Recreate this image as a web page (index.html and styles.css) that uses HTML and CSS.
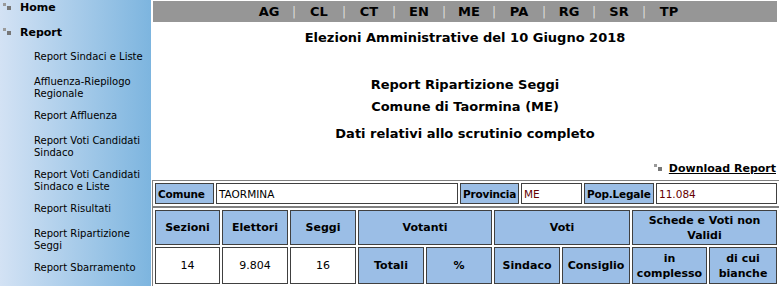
FILE: index.html
```html
<!DOCTYPE html>
<html lang="it">
<head>
  <meta charset="UTF-8" />
  <title>Report Ripartizione Seggi</title>
  <link rel="stylesheet" href="styles.css">
</head>
<body>
  <div class="page">
    <div class="sidebar">
      <a class="menu-main" href="#"><span class="bullet"></span>Home</a>
      <a class="menu-main" href="#"><span class="bullet"></span>Report</a>
      <ul class="submenu">
        <li><a href="#">Report Sindaci e Liste</a></li>
        <li class="two"><a href="#">Affluenza-Riepilogo Regionale</a></li>
        <li><a href="#">Report Affluenza</a></li>
        <li class="two"><a href="#">Report Voti Candidati Sindaco</a></li>
        <li class="two"><a href="#">Report Voti Candidati Sindaco e Liste</a></li>
        <li><a href="#">Report Risultati</a></li>
        <li class="two"><a href="#">Report Ripartizione Seggi</a></li>
        <li><a href="#">Report Sbarramento</a></li>
      </ul>
    </div>

    <div class="content">
      <div class="provbar">
        <a href="#">AG</a><span class="sep">|</span>
        <a href="#">CL</a><span class="sep">|</span>
        <a href="#">CT</a><span class="sep">|</span>
        <a href="#">EN</a><span class="sep">|</span>
        <a href="#">ME</a><span class="sep">|</span>
        <a href="#">PA</a><span class="sep">|</span>
        <a href="#">RG</a><span class="sep">|</span>
        <a href="#">SR</a><span class="sep">|</span>
        <a href="#">TP</a>
      </div>

      <h1 class="election">Elezioni Amministrative del 10 Giugno 2018</h1>

      <div class="report-title">
        <h2>Report Ripartizione Seggi</h2>
        <h2>Comune di Taormina (ME)</h2>
        <h2>Dati relativi allo scrutinio completo</h2>
      </div>

      <div class="download">
        <span class="bullet"></span><a href="#">Download Report</a>
      </div>

      <div class="frame">
        <table class="info">
          <colgroup>
            <col class="w-lbl1">
            <col>
            <col class="w-lbl2">
            <col class="w-prov">
            <col class="w-lbl3">
            <col class="w-pop">
          </colgroup>
          <tr>
            <td class="lbl">Comune</td>
            <td class="val">TAORMINA</td>
            <td class="lbl">Provincia</td>
            <td class="val val-red">ME</td>
            <td class="lbl">Pop.Legale</td>
            <td class="val val-red">11.084</td>
          </tr>
        </table>
        <table class="data">
          <colgroup>
            <col class="w65">
            <col class="w66">
            <col class="w66">
            <col class="w66">
            <col class="w66">
            <col class="w66">
            <col class="w68">
            <col class="w75">
            <col>
          </colgroup>
          <tr class="r1">
            <th>Sezioni</th>
            <th>Elettori</th>
            <th>Seggi</th>
            <th colspan="2">Votanti</th>
            <th colspan="2">Voti</th>
            <th colspan="2">Schede e Voti non Validi</th>
          </tr>
          <tr class="r2">
            <td>14</td>
            <td>9.804</td>
            <td>16</td>
            <th>Totali</th>
            <th>%</th>
            <th>Sindaco</th>
            <th>Consiglio</th>
            <th>in complesso</th>
            <th>di cui bianche</th>
          </tr>
          <tr class="r3">
            <td>&nbsp;</td>
            <td>&nbsp;</td>
            <td>&nbsp;</td>
            <td>&nbsp;</td>
            <td>&nbsp;</td>
            <td>&nbsp;</td>
            <td>&nbsp;</td>
            <td>&nbsp;</td>
            <td>&nbsp;</td>
          </tr>
        </table>
      </div>
    </div>
  </div>
</body>
</html>
```

FILE: styles.css
```css
html, body {
  margin: 0;
  padding: 0;
  height: 100%;
  overflow: hidden;
}

body {
  font-family: "DejaVu Sans", Verdana, sans-serif;
  color: #000;
  background: #fff;
}

a {
  color: #000;
  text-decoration: none;
}

.page {
  display: flex;
  height: 100%;
}

/* left menu */
.sidebar {
  width: 151px;
  flex: none;
  background: linear-gradient(to right, #d3e2f4, #7db5df);
  padding-top: 1px;
}

.bullet {
  display: inline-block;
  width: 9px;
  height: 7px;
  margin-right: 8px;
  vertical-align: 1px;
  background:
    linear-gradient(#9a9a9a, #9a9a9a) 0 0 / 3px 3px no-repeat,
    linear-gradient(#777, #777) 4px 3px / 4px 4px no-repeat;
}

.menu-main {
  display: block;
  padding-left: 3px;
  height: 25px;
  font-size: 11px;
  font-weight: bold;
  line-height: 14px;
}

.submenu {
  list-style: none;
  margin: 0;
  padding: 0 0 0 34px;
}

.submenu li {
  margin-bottom: 13px;
  font-size: 10px;
  line-height: 12px;
  padding-right: 6px;
}

.submenu li.two {
  margin-bottom: 10px;
}

/* main content */
.content {
  flex: 1;
  min-width: 0;
  padding: 1px 2px 0;
}

.provbar {
  background: #969696;
  height: 21px;
  display: flex;
  justify-content: center;
  align-items: center;
  font-size: 13px;
  font-weight: bold;
  padding-left: 8px;
}

.provbar a {
  width: 24px;
  text-align: center;
}

.provbar .sep {
  color: #ddd;
  font-weight: normal;
  font-size: 12px;
  width: 26px;
  text-align: center;
}

.election {
  margin: 7px 0 0;
  text-align: center;
  font-size: 13px;
  line-height: 18px;
}

.report-title {
  margin-top: 29px;
  text-align: center;
}

.report-title h2 {
  margin: 0;
  font-size: 13px;
  line-height: 18px;
}

.report-title h2:nth-child(2) {
  margin-top: 4px;
}

.report-title h2:nth-child(3) {
  margin-top: 9px;
}

.download {
  margin-top: 19px;
  text-align: right;
  font-size: 11px;
  font-weight: bold;
  line-height: 14px;
  padding-right: 1px;
}

.download a {
  text-decoration: underline;
}

.download .bullet {
  margin-right: 6px;
}

.frame {
  margin: 4px -3px 0 -1px;
  border: 1px solid #808080;
  border-bottom: none;
}

table {
  border-collapse: separate;
  border-spacing: 2px;
  width: 100%;
  table-layout: fixed;
  font-size: 11px;
}

.info {
  border-bottom: 2px solid #808080;
  font-size: 10.5px;
}

.info td {
  border: 1px solid #404040;
  height: 19px;
  padding: 0 2px;
  white-space: nowrap;
  overflow: hidden;
}

.info .lbl {
  background: #9bbee6;
  font-weight: bold;
  letter-spacing: -0.2px;
}

.info .val-red {
  color: #600;
}

.w-lbl1 { width: 59px; }
.w-lbl2 { width: 59px; }
.w-prov { width: 61px; }
.w-lbl3 { width: 70px; }
.w-pop { width: 121px; }

.data th,
.data td {
  border: 1px solid #404040;
  text-align: center;
  padding: 0 2px;
}

.data th {
  background: #9bbee6;
  font-weight: bold;
  line-height: 15px;
}

.data .r1 > * { height: 33px; }
.data .r2 > * { height: 35px; }
.data .r3 > * { height: 33px; }

.w65 { width: 65px; }
.w66 { width: 66px; }
.w68 { width: 68px; }
.w75 { width: 75px; }
```
